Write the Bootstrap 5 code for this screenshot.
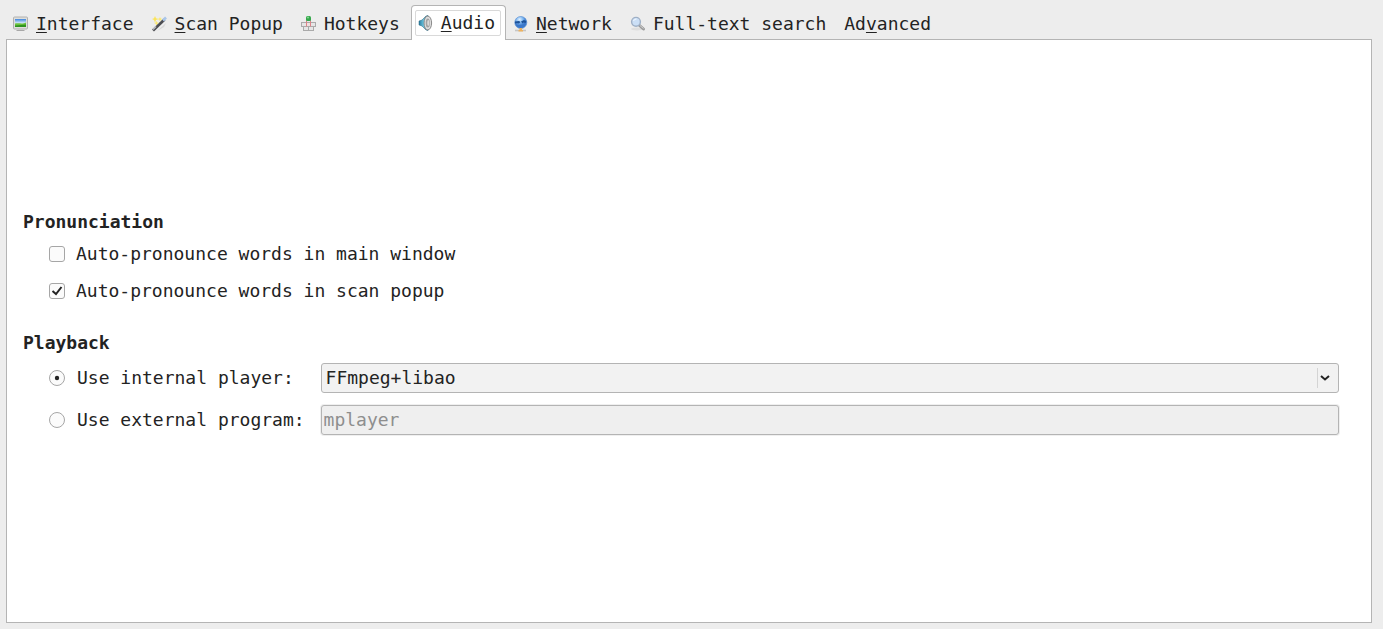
<!DOCTYPE html>
<html lang="en">
<head>
<meta charset="utf-8">
<meta name="viewport" content="width=device-width, initial-scale=1">
<title>Preferences</title>
<link href="https://cdn.jsdelivr.net/npm/bootstrap@5.3.0/dist/css/bootstrap.min.css" rel="stylesheet">
<style>
  body {
    background: #ededed;
    color: #232323;
    font-family: "DejaVu Sans Mono", monospace;
    font-size: 18px;
    line-height: 24px;
    padding: 5px 11px 6px 6px;
  }
  .pref-tabs { border: 0; height: 34px; margin-left: -2px; flex-wrap: nowrap; }
  .pref-tabs .nav-link {
    display: flex;
    align-items: center;
    gap: 7px;
    height: 35px;
    margin: 0;
    padding: 2px 9px 0;
    border: 0;
    border-radius: 4px 4px 0 0;
    color: inherit;
    white-space: nowrap;
  }
  .pref-tabs .nav-link svg { flex: none; width: 16px; height: 16px; }
  .pref-tabs .nav-link.active {
    position: relative;
    margin: 0 -2px 0 2px;
    padding: 0 10px 0 6px;
    border: 1px solid #b4b4b4;
    border-bottom: 0;
    background: #fff;
    color: inherit;
  }
  /* focus frame inside the current tab */
  .pref-tabs .nav-link.active::after {
    content: "";
    position: absolute;
    inset: 4px 4px 4px 3px;
    border: 1px solid #d9d9d9;
    border-radius: 2px;
  }
  u { text-decoration-thickness: 1px; text-underline-offset: 2px; text-decoration-skip-ink: none; }
  .pref-panel { background: #fff; border: 1px solid #b4b4b4; padding: 0 32px 18px 16px; }
  .pref-panel h2 { font-size: 18px; line-height: 24px; font-weight: 700; margin: 0 0 8px; }
  .indent { padding-left: 26px; }
  .checks { display: grid; gap: 13px; }
  .option { display: flex; align-items: center; gap: 11px; margin: 0; padding: 0; min-height: 24px; }
  .option .form-check-input {
    float: none;
    flex: none;
    width: 16px;
    height: 16px;
    margin: 0;
    border: 1px solid #a6a6a6;
    background-color: #fbfbfb;
  }
  .option .form-check-input[type=checkbox] { border-radius: 3px; }
  .option .form-check-input[type=checkbox]:checked {
    background-image: url("data:image/svg+xml,%3Csvg xmlns='http://www.w3.org/2000/svg' viewBox='0 0 14 14'%3E%3Cpath d='M2.500 7l3.500 3 5.500-7' fill='none' stroke='%23232323' stroke-width='2'/%3E%3C/svg%3E");
  }
  .option .form-check-input[type=radio]:checked {
    background-image: url("data:image/svg+xml,%3Csvg xmlns='http://www.w3.org/2000/svg' viewBox='0 0 14 14'%3E%3Ccircle cx='7' cy='7' r='2.2' fill='%23232323'/%3E%3C/svg%3E");
  }
  .players { display: grid; grid-template-columns: max-content 1fr; gap: 12px 16px; }
  .players .option { gap: 12px; }
  .players .form-select, .players .form-control {
    height: 30px;
    padding: 0 4px;
    border: 1px solid #b4b4b4;
    border-radius: 3px;
    font-size: 18px;
    line-height: 24px;
    color: #232323;
    background-color: #f2f2f2;
  }
  .players .form-select {
    padding-right: 28px;
    background-image: url("data:image/svg+xml,%3Csvg xmlns='http://www.w3.org/2000/svg' width='22' height='20'%3E%3Cpath d='M1.500 0v20' stroke='%23d4d4d4'/%3E%3Cpath d='M5 8l4 3.500 4-3.500' fill='none' stroke='%23232323' stroke-width='2'/%3E%3C/svg%3E");
    background-size: 22px 20px;
    background-position: right center;
  }
  .players .form-control { padding: 0 2px; color: #8e8e8e; background-color: #efefef; box-shadow: 0 0 0 1px #efefef; }
</style>
</head>
<body class="d-flex flex-column min-vh-100">
<ul class="nav nav-tabs pref-tabs" role="tablist">
  <li class="nav-item"><button class="nav-link" type="button" role="tab">
    <svg viewBox="0 0 16 16"><defs><linearGradient id="sky" x1="0" y1="0" x2="0" y2="1"><stop stop-color="#3d84dc"/><stop offset=".5" stop-color="#d4e9fb"/></linearGradient></defs><rect x=".5" y="1" width="14" height="12" rx="1" fill="#dededa" stroke="#b0b0b0"/><path fill="url(#sky)" d="M2 3h11v8H2z"/><path d="M2 7.500c4-1 7 1 11-1V11H2z" fill="#6cc23c"/><path d="M2 9.500c4 0 8-1 11-1V11H2z" fill="#2f9420"/><path d="M5 13.500h5V15H5z" fill="#c4c4c4"/><path d="M3.500 14.500h8" stroke="#a8a8a8"/></svg>
    <span><u>I</u>nterface</span></button></li>
  <li class="nav-item"><button class="nav-link" type="button" role="tab">
    <svg viewBox="0 0 16 16"><path d="M2 15l4-1 8-7-2 4-5 3z" fill="#d8d8d8"/><path d="M1 14.500L12.500 3.500" stroke="#4c4d52" stroke-width="2.800"/><path d="M1 13.500L4 10.500" stroke="#b9bbc0" stroke-width="1.600"/><path d="M11 4.500l3-3" stroke="#a9c6ea" stroke-width="2.600"/><path d="M3 0l1 2.300 2.500.7-2.500.9-1 2.600-1-2.600L0 3l2-.7z" fill="#fbe45a"/><path d="M8 1l.8 1.500 1.600.5-1.600.8L8 5.500l-.8-1.700L5.500 3l1.700-.5zM4.500 5l.8 1.500L7 7l-1.700.8-.8 1.700-.8-1.700L2 7l1.700-.5z" fill="#fbe872"/></svg>
    <span><u>S</u>can Popup</span></button></li>
  <li class="nav-item"><button class="nav-link" type="button" role="tab">
    <svg viewBox="0 0 16 16"><g stroke="#aaa" fill="#e6e6e6"><rect x="5.500" y="3.500" width="4" height="3"/><rect x=".5" y="6.500" width="5" height="4"/><rect x="5.500" y="6.500" width="4" height="4" fill="#f0dede"/><rect x="9.500" y="6.500" width="5" height="4"/><rect x="2.500" y="10.500" width="5" height="4"/><rect x="7.500" y="10.500" width="5" height="4"/></g><path d="M5.500 5v5.500M9.500 10.500V5" fill="none" stroke="#dc8388"/><rect x="5" y="0" width="5" height="5" rx="1.500" fill="#35a84b"/><circle cx="7" cy="1.500" r="1" fill="#8ad896"/></svg>
    <span>Hotkeys</span></button></li>
  <li class="nav-item"><button class="nav-link active" type="button" role="tab" aria-selected="true">
    <svg viewBox="0 0 16 16"><defs><linearGradient id="cone"><stop stop-color="#2a7a9d"/><stop offset=".5" stop-color="#66c3df"/><stop offset="1" stop-color="#185b78"/></linearGradient></defs><path d="M1 6l3-1 4-4 2-.5v15L8 15l-4-4-3-1z" fill="url(#cone)" stroke="#26647e" stroke-width=".5"/><ellipse cx="9.800" cy="8" rx="3.800" ry="6.900" fill="#dedede" stroke="#8a8a8a"/><ellipse cx="9.800" cy="8" rx="2.100" ry="4.600" fill="#a2a2a2"/><ellipse cx="10.300" cy="8" rx="1.100" ry="3" fill="#d8d8d8"/></svg>
    <span><u>A</u>udio</span></button></li>
  <li class="nav-item"><button class="nav-link" type="button" role="tab">
    <svg viewBox="0 0 16 16"><defs><radialGradient id="globe" cx=".4" cy=".25"><stop stop-color="#e2f2ff"/><stop offset=".6" stop-color="#7bb5f1"/><stop offset="1" stop-color="#3b78ca"/></radialGradient></defs><circle cx="7.800" cy="6.500" r="6" fill="url(#globe)" stroke="#5b90d2" stroke-width=".7"/><path d="M2 5.500l4-.5 1.500 1L6 7.500l-2-.3-2 .3zM8 5.500l3-1.500 2.500 1.500-1 1.500-2-.5-1 1z" fill="#1d5299"/><path d="M2 14.500h11" stroke="#c6c6c6" stroke-width="1.600"/><path d="M6.500 12h2.500v2h1v1.500H5.500V14h1z" fill="#eeb25e"/></svg>
    <span><u>N</u>etwork</span></button></li>
  <li class="nav-item"><button class="nav-link" type="button" role="tab">
    <svg viewBox="0 0 16 16"><ellipse cx="7" cy="13" rx="6" ry="1.500" fill="#dedede"/><path d="M9 9l4.500 4" stroke="#9b9b9b" stroke-width="3" stroke-linecap="round"/><path d="M10 9.500l3.500 3" stroke="#d2d2d2"/><circle cx="6" cy="5.800" r="4.400" fill="#cbdff6" stroke="#9fb0c6" stroke-width="1.400"/><path d="M3.500 5a3 3 0 0 1 3-2" stroke="#f4faff" fill="none"/></svg>
    <span>Full-text search</span></button></li>
  <li class="nav-item"><button class="nav-link" type="button" role="tab"><span>Ad<u>v</u>anced</span></button></li>
</ul>
<main class="pref-panel flex-grow-1 d-flex flex-column justify-content-center">
  <section>
    <h2>Pronunciation</h2>
    <div class="indent checks">
      <div class="form-check option"><input class="form-check-input" type="checkbox" id="main-window"><label for="main-window">Auto-pronounce words in main window</label></div>
      <div class="form-check option"><input class="form-check-input" type="checkbox" id="scan-popup" checked><label for="scan-popup">Auto-pronounce words in scan popup</label></div>
    </div>
  </section>
  <section class="pt-1 mt-4">
    <h2>Playback</h2>
    <div class="indent players">
      <div class="form-check option"><input class="form-check-input" type="radio" name="player" id="internal" checked><label for="internal">Use internal player:</label></div>
      <select class="form-select" aria-label="Internal player"><option>FFmpeg+libao</option></select>
      <div class="form-check option"><input class="form-check-input" type="radio" name="player" id="external"><label for="external">Use external program:</label></div>
      <input class="form-control" type="text" value="mplayer" aria-label="External program" disabled>
    </div>
  </section>
</main>
<script src="https://cdn.jsdelivr.net/npm/bootstrap@5.3.0/dist/js/bootstrap.bundle.min.js"></script>
</body>
</html>
